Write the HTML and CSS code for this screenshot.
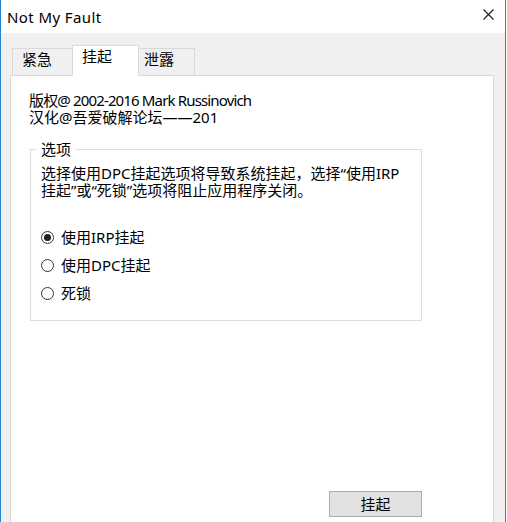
FILE: index.html
```html
<!DOCTYPE html>
<html lang="zh-CN">
<head>
<meta charset="utf-8">
<title>Not My Fault</title>
<link rel="stylesheet" href="styles.css">
</head>
<body>
<div class="window">
  <div class="titlebar">
    <span class="title">Not My Fault</span>
    <svg class="close" width="11" height="11" viewBox="0 0 11 11" aria-label="关闭">
      <path d="M0.5 0.5 L10.5 10.5 M10.5 0.5 L0.5 10.5" stroke="#1a1a1a" stroke-width="1.1" fill="none"/>
    </svg>
  </div>
  <div class="client">
    <div class="tabs">
      <div class="tab tab-1">紧急</div>
      <div class="tab tab-2 selected">挂起</div>
      <div class="tab tab-3">泄露</div>
    </div>
    <div class="panel">
      <div class="content">
        <p class="line copyright">版权@ 2002-2016 Mark Russinovich</p>
        <p class="line">汉化@吾爱破解论坛——201</p>
        <fieldset class="group">
          <legend class="legend">选项</legend>
          <p class="desc">选择使用DPC挂起选项将导致系统挂起，选择“使用IRP<br>挂起”或“死锁”选项将阻止应用程序关闭。</p>
          <div class="radios">
            <div class="radio-row"><span class="radio checked"><span class="dot"></span></span><span class="radio-label">使用IRP挂起</span></div>
            <div class="radio-row"><span class="radio"></span><span class="radio-label">使用DPC挂起</span></div>
            <div class="radio-row"><span class="radio"></span><span class="radio-label">死锁</span></div>
          </div>
        </fieldset>
        <button class="btn" type="button">挂起</button>
      </div>
    </div>
  </div>
</div>
</body>
</html>
```
FILE: styles.css
```css
* {
  box-sizing: border-box;
  margin: 0;
  padding: 0;
}

html, body {
  width: 507px;
  height: 522px;
  overflow: hidden;
  background: #ffffff;
}

body {
  font-family: "Noto Sans", "Noto Sans CJK SC", sans-serif;
  font-size: 15px;
  color: #000000;
}

.window {
  width: 506px;
  height: 522px;
  border-left: 1px solid #1f86d6;
  border-right: 1px solid #1f86d6;
  background: #f0f0f0;
  display: flex;
  flex-direction: column;
  overflow: hidden;
}

.titlebar {
  flex: none;
  height: 33px;
  background: #ffffff;
  display: flex;
  align-items: center;
  justify-content: space-between;
  padding-left: 6px;
  padding-right: 11px;
}

.title {
  font-size: 15px;
  line-height: 20px;
  letter-spacing: 0.4px;
  color: #000000;
}

.close {
  align-self: flex-start;
  margin-top: 9px;
}

.client {
  flex: 1;
  display: flex;
  flex-direction: column;
  padding: 12px 11px 0 9px;
}

.tabs {
  flex: none;
  height: 31px;
  display: flex;
  align-items: flex-end;
  padding-left: 2px;
  margin-bottom: -1px;
}

.tab {
  height: 27px;
  margin-bottom: 1px;
  border: 1px solid #d9d9d9;
  border-bottom: none;
  background: #f0f0f0;
  line-height: 17px;
  padding-top: 2px;
  white-space: nowrap;
}

.tab-1 {
  width: 61px;
  padding-left: 9px;
}

.tab-2 {
  width: 67px;
  margin-left: -1px;
  padding-left: 9px;
}

.tab-3 {
  width: 57px;
  margin-left: -1px;
  padding-left: 5px;
}

.tab.selected {
  height: 31px;
  margin-bottom: 0;
  background: #ffffff;
  position: relative;
  z-index: 1;
}

.panel {
  flex: 1;
  min-height: 480px;
  background: #ffffff;
  border: 1px solid #d9d9d9;
  padding: 16px 0 0 18px;
}

.content {
  width: 393px;
  display: flex;
  flex-direction: column;
}

.line {
  line-height: 17px;
  white-space: nowrap;
}

.copyright {
  letter-spacing: -0.85px;
}

.group {
  width: 392px;
  margin: 15px 0 0 1px;
  border: 1px solid #dcdcdc;
  padding: 7px 10px 13px 10px;
}

.legend {
  line-height: 17px;
  padding: 0 5px;
  margin-left: -5px;
}

.desc {
  line-height: 17px;
  white-space: nowrap;
}

.radios {
  margin-top: 24px;
  display: flex;
  flex-direction: column;
}

.radio-row {
  height: 28px;
  display: flex;
  align-items: center;
  gap: 7px;
}

.radio {
  width: 13px;
  height: 13px;
  border: 1px solid #333333;
  border-radius: 50%;
  background: #ffffff;
  display: flex;
  align-items: center;
  justify-content: center;
  flex: none;
}

.dot {
  width: 7px;
  height: 7px;
  border-radius: 50%;
  background: #222222;
}

.radio-label {
  line-height: 17px;
}

.btn {
  align-self: flex-end;
  margin-top: 170px;
  width: 93px;
  height: 26px;
  border: 1px solid #adadad;
  background: #e1e1e1;
  font-family: inherit;
  font-size: 15px;
  line-height: 17px;
  color: #000000;
}
```
